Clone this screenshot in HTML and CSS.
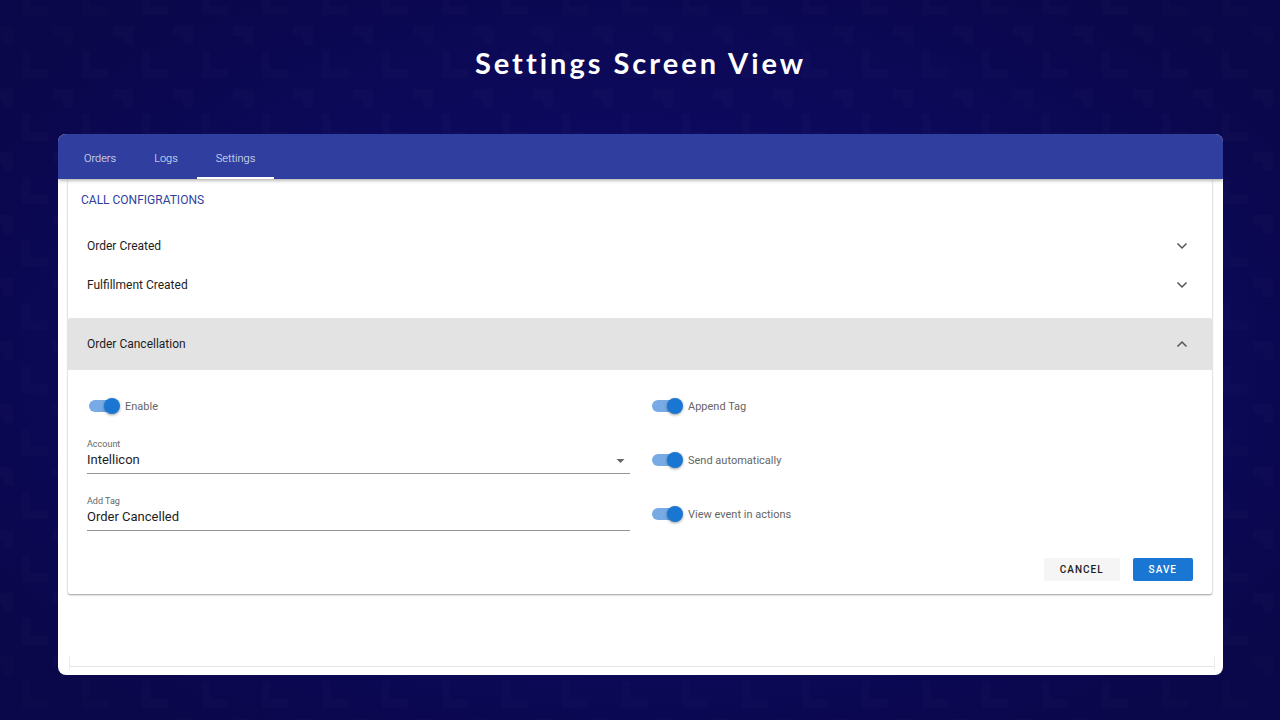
FILE: index.html
```html
<!DOCTYPE html>
<html lang="en">
<head>
    <meta charset="UTF-8">
    <meta name="viewport" content="width=device-width, initial-scale=1.0">
    <title>Settings Screen View</title>
    <link rel="stylesheet" href="styles.css">
</head>
<body>
    <svg class="backdrop" aria-hidden="true">
        <defs>
            <pattern id="corners" width="60" height="63" patternUnits="userSpaceOnUse">
                <path d="M22 51h8v18h18v9H22z M22 -12h8v18h18v9H22z" />
                <path d="M53 26h20v19h-8l-3-9h-9z M-7 26h20v19h-8l-3-9h-9z" />
            </pattern>
        </defs>
        <rect width="100%" height="100%" fill="url(#corners)" />
    </svg>

    <h1>Settings Screen View</h1>

    <div class="window">
        <nav class="tabs">
            <a href="#orders">Orders</a>
            <a href="#logs">Logs</a>
            <a href="#settings" class="active">Settings</a>
        </nav>

        <main class="content">
            <section class="panel">
                <h2>CALL CONFIGRATIONS</h2>

                <button type="button" class="item" aria-expanded="false">
                    <span>Order Created</span>
                    <svg viewBox="0 0 12 12"><path d="M1.5 3.5L6 8l4.5-4.5" /></svg>
                </button>
                <button type="button" class="item" aria-expanded="false">
                    <span>Fulfillment Created</span>
                    <svg viewBox="0 0 12 12"><path d="M1.5 3.5L6 8l4.5-4.5" /></svg>
                </button>
                <button type="button" class="item open" aria-expanded="true">
                    <span>Order Cancellation</span>
                    <svg viewBox="0 0 12 12"><path d="M1.5 8.5L6 4l4.5 4.5" /></svg>
                </button>

                <form class="settings-form">
                    <div class="columns">
                        <div class="fields">
                            <label class="toggle"><input type="checkbox" checked>Enable</label>
                            <div class="field">
                                <label for="account">Account</label>
                                <select id="account">
                                    <option>Intellicon</option>
                                </select>
                                <svg class="arrow" viewBox="0 0 8 4"><path d="M0 0h8L4 4z" /></svg>
                            </div>
                            <div class="field">
                                <label for="tag">Add Tag</label>
                                <input type="text" id="tag" value="Order Cancelled">
                            </div>
                        </div>
                        <div class="toggles">
                            <label class="toggle"><input type="checkbox" checked>Append Tag</label>
                            <label class="toggle"><input type="checkbox" checked>Send automatically</label>
                            <label class="toggle"><input type="checkbox" checked>View event in actions</label>
                        </div>
                    </div>
                    <div class="actions">
                        <button type="button" class="cancel">CANCEL</button>
                        <button type="submit" class="save">SAVE</button>
                    </div>
                </form>
            </section>

            <div class="next-panel"></div>
        </main>
    </div>
</body>
</html>
```

FILE: styles.css
```css
* {
    box-sizing: border-box;
}

body {
    margin: 0;
    padding: 43px 57px 45px 58px;
    min-height: 100vh;
    display: flex;
    flex-direction: column;
    font-family: Roboto, "Liberation Sans", sans-serif;
    font-size: 12px;
    color: #1d1d1d;
    background: radial-gradient(ellipse at center, #0d0a66 0%, #0d0a60 40%, #0a074a 90%);
}

.backdrop {
    position: absolute;
    inset: 0;
    width: 100%;
    height: 100%;
    z-index: -1;
}

.backdrop path {
    fill: #fff;
    opacity: 0.012;
}

h1 {
    margin: 0 0 51px;
    font-family: Lato, sans-serif;
    font-size: 29px;
    line-height: 40px;
    font-weight: 700;
    letter-spacing: 3px;
    text-align: center;
    color: #fff;
}

.window {
    flex: 1;
    display: flex;
    flex-direction: column;
    background: #fff;
    border-radius: 8px;
    overflow: hidden;
}

.tabs {
    display: flex;
    height: 45px;
    padding-left: 7px;
    background: #303f9f;
    box-shadow: 0 1px 4px rgba(0, 0, 0, 0.4);
    z-index: 1;
}

.tabs a {
    padding: 7px 19px 0;
    line-height: 36px;
    font-size: 11px;
    font-weight: 300;
    color: #eceefa;
    text-decoration: none;
    border-bottom: 2px solid transparent;
}

.tabs a.active {
    border-color: #fff;
}

.content {
    flex: 1;
    display: flex;
    flex-direction: column;
    justify-content: space-between;
    padding: 0 11px 5px 10px;
}

.panel {
    border-radius: 2px;
    box-shadow: 0 1px 2px rgba(0, 0, 0, 0.4);
}

h2 {
    margin: 0;
    padding: 12px 13px 17px;
    font-size: 12px;
    line-height: 18px;
    font-weight: 400;
    color: #303f9f;
}

button {
    border: none;
    font-family: inherit;
    cursor: pointer;
}

.item {
    display: flex;
    justify-content: space-between;
    align-items: center;
    width: 100%;
    height: 39px;
    padding: 0 24px 0 19px;
    font-size: 12px;
    color: #1d1d1d;
    background: none;
}

.item svg {
    width: 12px;
    height: 12px;
    fill: none;
    stroke: #555;
    stroke-width: 1.5;
}

.item.open {
    height: 52px;
    margin-top: 14px;
    background: #e3e3e3;
    border-radius: 2px 2px 0 0;
}

.settings-form {
    padding: 26px 19px 13px;
}

.columns {
    display: grid;
    grid-template-columns: 1fr 1fr;
    gap: 20px;
}

.fields,
.toggles {
    display: flex;
    flex-direction: column;
    gap: 22px;
}

.toggles {
    gap: 34px;
}

.toggle {
    display: flex;
    align-items: center;
    gap: 5px;
    height: 20px;
    padding-left: 2px;
    font-size: 11px;
    color: #666;
}

.toggle input {
    appearance: none;
    display: flex;
    align-items: center;
    width: 31px;
    height: 16px;
    margin: 0;
}

.toggle input::before {
    content: '';
    width: 28px;
    height: 12px;
    border-radius: 6px;
    background: #78abe5;
}

.toggle input::after {
    content: '';
    width: 16px;
    height: 16px;
    margin-left: -13px;
    border-radius: 50%;
    background: #1976d2;
    box-shadow: 0 1px 3px rgba(0, 0, 0, 0.4);
}

.field {
    position: relative;
    display: flex;
    flex-direction: column;
}

.field label {
    font-size: 9px;
    line-height: 12px;
    color: #666;
}

.field select,
.field input {
    appearance: none;
    width: 100%;
    height: 24px;
    margin-bottom: -1px;
    padding: 0 0 4px;
    border: none;
    border-bottom: 1px solid #949494;
    border-radius: 0;
    font-family: inherit;
    font-size: 13px;
    color: #1d1d1d;
    background: none;
}

.field .arrow {
    position: absolute;
    right: 5px;
    bottom: 10px;
    width: 9px;
    height: 4px;
    fill: #666;
}

.actions {
    display: flex;
    justify-content: flex-end;
    gap: 13px;
    margin-top: 28px;
}

.actions button {
    height: 23px;
    padding: 0 16px;
    font-size: 10px;
    font-weight: 500;
    letter-spacing: 1px;
    border-radius: 2px;
}

.cancel {
    color: #1d1d1d;
    background: #f5f5f5;
}

.save {
    color: #fff;
    background: #1976d2;
}

/* edge of the panel that follows further down */
.next-panel {
    height: 14px;
    margin: 0 -3px 0 1px;
    border: solid #ececec;
    border-width: 0 1px;
    background: linear-gradient(#e4e4e4, #e4e4e4) 0 10px / 100% 1px no-repeat;
}
```
